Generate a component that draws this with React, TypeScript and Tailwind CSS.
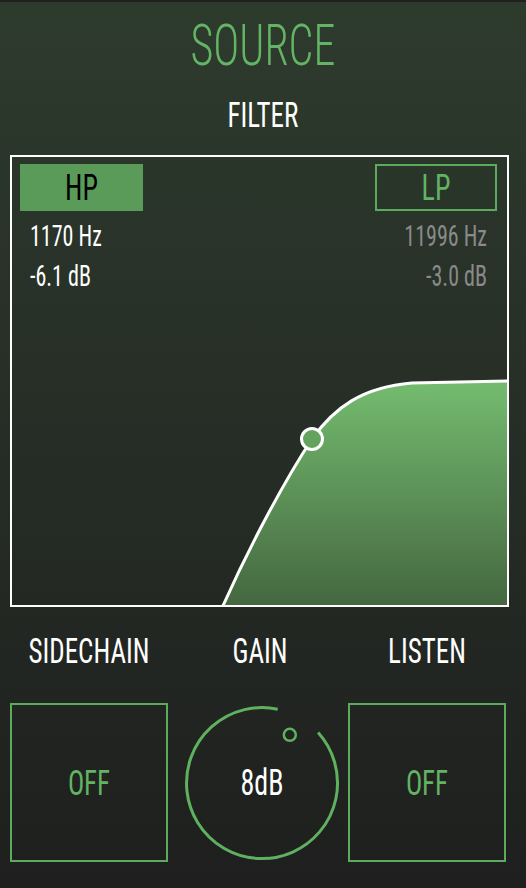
const txt = "block scale-y-[1.3] font-['Roboto_Condensed',sans-serif]";

function Knob({ value }: { value: string }) {
  // arc runs clockwise from 48° round to 12° (measured from the top), leaving a gap
  return (
    <div className="relative h-[156px] w-[156px]">
      <svg width="156" height="156" viewBox="0 0 156 156" className="absolute inset-0">
        <path
          d="M134.1 27.5 A75.5 75.5 0 1 1 93.7 4.2"
          fill="none"
          stroke="#5fb160"
          strokeWidth="3"
          strokeLinecap="butt"
        />
        <circle cx="105.8" cy="29.8" r="6" fill="none" stroke="#5fb160" strokeWidth="2.5" />
      </svg>
      <div className="relative flex h-full items-center justify-center">
        <span className={`${txt} text-[28px] leading-[28px] text-white`}>{value}</span>
      </div>
    </div>
  );
}

function Toggle({ label }: { label: string }) {
  return (
    <button className="flex h-[159px] w-[158px] items-center justify-center border-2 border-[#5cab5c]">
      <span className={`${txt} text-[27px] leading-[28px] text-[#62b463]`}>{label}</span>
    </button>
  );
}

export default function App() {
  return (
    <div className="h-[888px] w-[526px] overflow-hidden bg-linear-to-b from-[#2d3b2d] via-[#262d26] to-[#1e1f1e]">
      <div className="h-[2px] bg-[#1f211f]" />

      <h1 className={`${txt} mt-[21px] text-center text-[44px] leading-[44px] font-light text-[#63b565]`}>
        SOURCE
      </h1>
      <h2 className={`${txt} mt-[34px] text-center text-[27px] leading-[28px] text-white`}>FILTER</h2>

      {/* filter curve */}
      <div className="relative mt-[26px] ml-[10px] h-[452px] w-[499px] border-2 border-white">
        <svg className="absolute inset-0" width="495" height="448" viewBox="12 157 495 448">
          <defs>
            <linearGradient id="fillGrad" x1="0" y1="0" x2="0" y2="1">
              <stop offset="0" stopColor="#74bc6f" />
              <stop offset="1" stopColor="#44663f" />
            </linearGradient>
          </defs>
          <path
            d="M222 608 C250 545 285 480 312 439 C334 408 362 387 412 383 L510 381 L510 608 Z"
            fill="url(#fillGrad)"
          />
          <path
            d="M222 608 C250 545 285 480 312 439 C334 408 362 387 412 383 L510 381"
            fill="none"
            stroke="#fff"
            strokeWidth="3"
          />
          <circle cx="312" cy="439" r="10.5" fill="#63a35e" stroke="#fff" strokeWidth="3" />
        </svg>

        <div className="relative flex justify-between pt-[7px] pr-[10px] pl-[8px]">
          <button className="flex h-[47px] w-[123px] items-center justify-center bg-[#5b9b5a]">
            <span className={`${txt} text-[28px] leading-[28px] text-black`}>HP</span>
          </button>
          <button className="flex h-[47px] w-[122px] items-center justify-center border-2 border-[#5cab5c]">
            <span className={`${txt} text-[28px] leading-[28px] text-[#62b463]`}>LP</span>
          </button>
        </div>

        <div className="relative mt-[15px] flex justify-between pr-[20px] pl-[18px]">
          <div className="flex flex-col gap-[18px] text-white">
            <span className={`${txt} text-[22px] leading-[22px]`}>1170 Hz</span>
            <span className={`${txt} text-[22px] leading-[22px]`}>-6.1 dB</span>
          </div>
          <div className="flex flex-col items-end gap-[18px] text-[#8a8a8a]">
            <span className={`${txt} text-[22px] leading-[22px]`}>11996 Hz</span>
            <span className={`${txt} text-[22px] leading-[22px]`}>-3.0 dB</span>
          </div>
        </div>
      </div>

      {/* controls */}
      <div className="mt-[30px] ml-[10px] flex text-white">
        <div className="w-[158px] text-center">
          <span className={`${txt} text-[27px] leading-[28px]`}>SIDECHAIN</span>
        </div>
        <div className="w-[180px] pl-[4px] text-center">
          <span className={`${txt} text-[27px] leading-[28px]`}>GAIN</span>
        </div>
        <div className="w-[158px] text-center">
          <span className={`${txt} text-[27px] leading-[28px]`}>LISTEN</span>
        </div>
      </div>

      <div className="mt-[38px] ml-[10px] flex items-center">
        <Toggle label="OFF" />
        <div className="flex w-[180px] justify-start pl-[16px]">
          <Knob value="8dB" />
        </div>
        <Toggle label="OFF" />
      </div>
    </div>
  );
}
